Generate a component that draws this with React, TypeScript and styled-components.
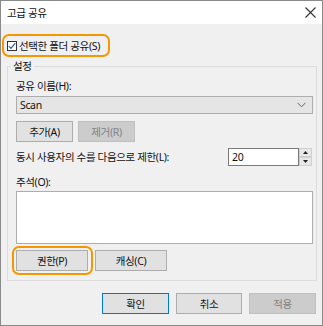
import styled, { createGlobalStyle } from 'styled-components';

const GlobalStyle = createGlobalStyle`
  html, body {
    margin: 0;
    padding: 0;
    background: #ffffff;
  }
  body {
    font-family: "Noto Sans", "Noto Sans CJK KR", sans-serif;
    font-size: 10.5px;
    letter-spacing: -0.35px;
    color: #111111;
  }
`;

const App = () => {
  return (
    <>
      <GlobalStyle />
      <Window>
        <TitleBar>
          <Title>고급 공유</Title>
          <CloseIcon width="11" height="11" viewBox="0 0 11 11">
            <path d="M0.5 0.5 L10.5 10.5 M10.5 0.5 L0.5 10.5" stroke="#333" strokeWidth="1.1" />
          </CloseIcon>
        </TitleBar>
        <Body>
          <CheckHighlight>
            <CheckBox>
              <svg width="8" height="8" viewBox="0 0 8 8">
                <path d="M0.8 4.2 L3 6.4 L7.3 1.2" fill="none" stroke="#2f5a9e" strokeWidth="1.2" />
              </svg>
            </CheckBox>
            <span>선택한 폴더 공유(S)</span>
          </CheckHighlight>

          <GroupBox>
            <Legend>설정</Legend>
            <Label>공유 이름(H):</Label>
            <Combo>
              <span>Scan</span>
              <svg width="9" height="6" viewBox="0 0 9 6">
                <path d="M0.5 0.8 L4.5 4.8 L8.5 0.8" fill="none" stroke="#666" strokeWidth="1" />
              </svg>
            </Combo>
            <ButtonRow $top={7}>
              <Button $width={57}>추가(A)</Button>
              <Button $width={57} $disabled>제거(R)</Button>
            </ButtonRow>
            <LimitRow>
              <span>동시 사용자의 수를 다음으로 제한(L):</span>
              <Spin>
                <SpinInput>20</SpinInput>
                <SpinButtons>
                  <SpinButton>
                    <svg width="5" height="3" viewBox="0 0 5 3">
                      <path d="M0 3 L2.5 0 L5 3 Z" fill="#222" />
                    </svg>
                  </SpinButton>
                  <SpinButton>
                    <svg width="5" height="3" viewBox="0 0 5 3">
                      <path d="M0 0 L2.5 3 L5 0 Z" fill="#222" />
                    </svg>
                  </SpinButton>
                </SpinButtons>
              </Spin>
            </LimitRow>
            <Label $top={8}>주석(O):</Label>
            <TextArea />
            <ButtonRow $top={2}>
              <ButtonHighlight>
                <Button $width={72}>권한(P)</Button>
              </ButtonHighlight>
              <Button $width={72}>캐싱(C)</Button>
            </ButtonRow>
          </GroupBox>

          <Footer>
            <Button $width={67} $primary>확인</Button>
            <Button $width={66}>취소</Button>
            <Button $width={67} $disabled>적용</Button>
          </Footer>
        </Body>
      </Window>
    </>
  );
};

export default App;

const Window = styled.div`
  width: 323px;
  height: 326px;
  box-sizing: border-box;
  border: 1px solid #8a8a8a;
  display: flex;
  flex-direction: column;
  background: #f0f0f0;
`;

const TitleBar = styled.div`
  height: 23px;
  flex-shrink: 0;
  background: #ffffff;
  display: flex;
  align-items: center;
  justify-content: space-between;
  padding: 0 6px 0 6px;
`;

const Title = styled.span`
  font-size: 10.5px;
  line-height: 16px;
`;

const CloseIcon = styled.svg`
  display: block;
`;

const Body = styled.div`
  flex: 1;
  display: flex;
  flex-direction: column;
  align-items: flex-start;
`;

const CheckHighlight = styled.div`
  margin: 10px 0 0 1px;
  height: 19px;
  border: 2px solid #f39800;
  border-radius: 7px;
  padding: 0 8px 0 3px;
  display: flex;
  align-items: center;
  gap: 2px;
  line-height: 16px;
`;

const CheckBox = styled.span`
  width: 10px;
  height: 10px;
  box-sizing: border-box;
  border: 1px solid #333333;
  background: #ffffff;
  display: flex;
  align-items: center;
  justify-content: center;
`;

const GroupBox = styled.fieldset`
  align-self: stretch;
  margin: 1px 5px 0 6px;
  padding: 4px 3px 5px 8px;
  min-width: 0;
  border: 1px solid #dcdcdc;
  display: flex;
  flex-direction: column;
`;

const Legend = styled.legend`
  margin-left: -5px;
  padding: 0 2px;
  line-height: 16px;
`;

const Label = styled.div<{ $top?: number }>`
  line-height: 16px;
  margin-top: ${(p) => p.$top ?? 0}px;
`;

const Combo = styled.div`
  margin-top: 2px;
  height: 18px;
  box-sizing: border-box;
  border: 1px solid #adadad;
  background: #e5e5e5;
  display: flex;
  align-items: center;
  justify-content: space-between;
  padding: 0 6px 0 3px;
`;

const ButtonRow = styled.div<{ $top: number }>`
  margin-top: ${(p) => p.$top}px;
  display: flex;
  align-items: center;
  gap: 5px;
`;

const Button = styled.div<{ $width: number; $disabled?: boolean; $primary?: boolean }>`
  width: ${(p) => p.$width}px;
  height: 21px;
  box-sizing: border-box;
  border: 1px solid
    ${(p) => (p.$primary ? '#0078d7' : p.$disabled ? '#bfbfbf' : '#adadad')};
  background: ${(p) => (p.$disabled ? '#cccccc' : '#e1e1e1')};
  color: ${(p) => (p.$disabled ? '#838383' : '#111111')};
  display: flex;
  align-items: center;
  justify-content: center;
  line-height: 16px;
`;

const ButtonHighlight = styled.div`
  margin-left: -4px;
  margin-right: -3px;
  border: 2px solid #f39800;
  border-radius: 7px;
  padding: 2px 3px 2px 2px;
  background: #f0f0f0;
`;

const LimitRow = styled.div`
  margin-top: 6px;
  display: flex;
  align-items: center;
  justify-content: space-between;
  line-height: 16px;
`;

const Spin = styled.div`
  display: flex;
  margin-right: 1px;
`;

const SpinInput = styled.div`
  width: 71px;
  height: 18px;
  box-sizing: border-box;
  border: 1px solid #7a7a7a;
  background: #ffffff;
  padding: 0 3px;
  line-height: 16px;
`;

const SpinButtons = styled.div`
  width: 13px;
  height: 18px;
  display: flex;
  flex-direction: column;
`;

const SpinButton = styled.div`
  flex: 1;
  box-sizing: border-box;
  border: 1px solid #cfcfcf;
  background: #e8e8e8;
  display: flex;
  align-items: center;
  justify-content: center;
`;

const TextArea = styled.div`
  margin-top: 1px;
  height: 53px;
  box-sizing: border-box;
  border: 1px solid #adadad;
  background: #ffffff;
`;

const Footer = styled.div`
  align-self: stretch;
  margin-top: 12px;
  padding-right: 6px;
  display: flex;
  justify-content: flex-end;
  gap: 7px;
`;
